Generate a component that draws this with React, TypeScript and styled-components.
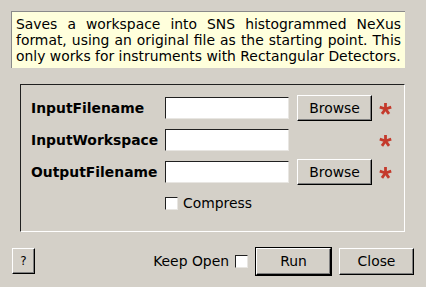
import React from 'react';
import styled, { createGlobalStyle } from 'styled-components';

const GlobalStyle = createGlobalStyle`
  html, body {
    margin: 0;
    padding: 0;
    background: #d4d0c8;
  }
  body {
    font-family: "DejaVu Sans", "Liberation Sans", sans-serif;
    font-size: 13.9px;
    color: #000;
  }
`;

const Dialog = styled.div`
  width: 426px;
  height: 287px;
  box-sizing: border-box;
  padding: 11px 21px 0 11px;
  display: flex;
  flex-direction: column;
  background: #d4d0c8;
  overflow: hidden;
`;

const Info = styled.div`
  background: #ffffdc;
  border-top: 1px solid #8a8a8a;
  border-left: 1px solid #8a8a8a;
  padding: 4px 4px 4px 4px;
  line-height: 16px;
  text-align: justify;
  height: 48px;
  flex-shrink: 0;
`;

const Group = styled.div`
  margin: 16px 0 0 9px;
  border-top: 1px solid #202020;
  border-left: 1px solid #202020;
  border-right: 1px solid #fff;
  border-bottom: 1px solid #fff;
  padding: 10px 0 19px 10px;
  display: flex;
  flex-direction: column;
  gap: 6px;
  flex-shrink: 0;
`;

const Row = styled.div`
  display: grid;
  grid-template-columns: 134px 124px 8px 75px 7px 12px;
  align-items: center;
  height: 26px;
`;

const Label = styled.span`
  font-weight: bold;
  white-space: nowrap;
`;

const TextInput = styled.input`
  box-sizing: border-box;
  width: 124px;
  height: 22px;
  margin: 0;
  padding: 0 3px;
  background: #fff;
  border-top: 1px solid #202020;
  border-left: 1px solid #202020;
  border-right: 1px solid #e8e6e2;
  border-bottom: 1px solid #e8e6e2;
  outline: none;
  font: inherit;
  grid-column: 2;
`;

const Button = styled.button<{ $default?: boolean }>`
  box-sizing: border-box;
  margin: 0;
  padding: 0;
  background: #d4d0c8;
  font: inherit;
  color: #000;
  border-top: 1px solid #fff;
  border-left: 1px solid #fff;
  border-right: 1px solid #000;
  border-bottom: 1px solid #000;
  box-shadow: inset -1px -1px 0 #808080;
  outline: ${p => (p.$default ? '1px solid #000' : 'none')};
`;

const BrowseButton = styled(Button)`
  grid-column: 4;
  width: 75px;
  height: 26px;
`;

const Star = styled.svg`
  grid-column: 6;
  width: 13px;
  height: 13px;
  display: block;
`;

const CheckRow = styled.label`
  display: flex;
  align-items: center;
  gap: 5px;
  margin-left: 134px;
  height: 18px;
  margin-top: 3px;
`;

const Box = styled.span`
  box-sizing: border-box;
  display: inline-block;
  width: 13px;
  height: 13px;
  background: #fff;
  border-top: 1px solid #202020;
  border-left: 1px solid #202020;
  border-right: 1px solid #e8e6e2;
  border-bottom: 1px solid #e8e6e2;
`;

const Footer = styled.div`
  display: flex;
  align-items: center;
  margin: 15px -9px 0 1px;
  height: 28px;
  flex-shrink: 0;
`;

const HelpButton = styled(Button)`
  width: 23px;
  height: 26px;
  font-size: 12px;
`;

const Spacer = styled.div`
  flex: 1;
`;

const KeepOpen = styled.label`
  display: flex;
  align-items: center;
  gap: 6px;
`;

const ActionButton = styled(Button)`
  width: 75px;
  height: 27px;
  margin-left: 8px;
`;

const Asterisk = () => (
  <Star viewBox="0 0 13 13">
    {[-90, -18, 54, 126, 198].map(a => {
      const r = (a * Math.PI) / 180;
      return (
        <line
          key={a}
          x1="6.5"
          y1="7"
          x2={6.5 + 6 * Math.cos(r)}
          y2={7 + 6 * Math.sin(r)}
          stroke="#c43a2c"
          strokeWidth="2.8"
          strokeLinecap="butt"
        />
      );
    })}
  </Star>
);

type FieldProps = {
  label: string
  browse?: boolean
};

const Field = ({ label, browse }: FieldProps) => (
  <Row>
    <Label>{label}</Label>
    <TextInput />
    {browse && <BrowseButton>Browse</BrowseButton>}
    <Asterisk />
  </Row>
);

export default function App() {
  return (
    <>
      <GlobalStyle />
      <Dialog>
        <Info>
          Saves a workspace into SNS histogrammed NeXus format, using an original file as the
          starting point. This only works for instruments with Rectangular Detectors.
        </Info>
        <Group>
          <Field label="InputFilename" browse />
          <Field label="InputWorkspace" />
          <Field label="OutputFilename" browse />
          <CheckRow>
            <Box />
            Compress
          </CheckRow>
        </Group>
        <Footer>
          <HelpButton>?</HelpButton>
          <Spacer />
          <KeepOpen>
            Keep Open
            <Box />
          </KeepOpen>
          <ActionButton $default>Run</ActionButton>
          <ActionButton>Close</ActionButton>
        </Footer>
      </Dialog>
    </>
  );
}
